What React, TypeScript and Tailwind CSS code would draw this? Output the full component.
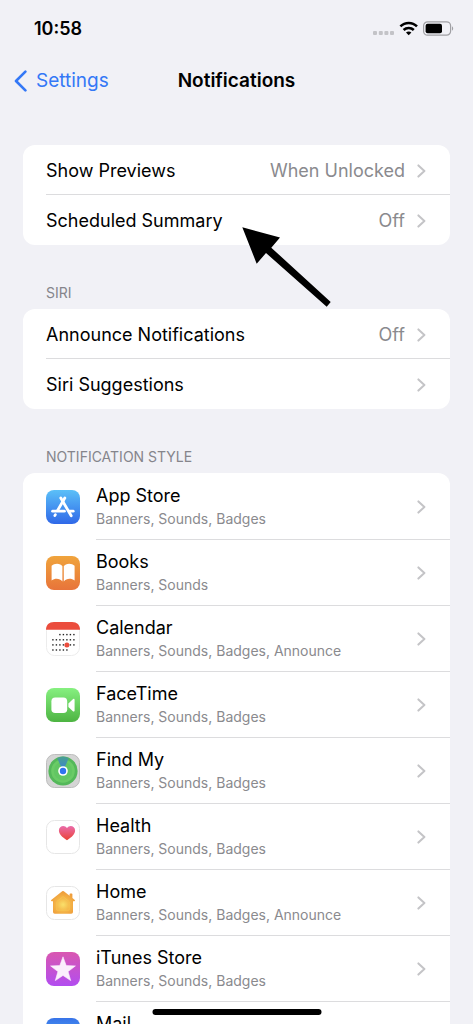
import React from 'react'

interface AppEntry {
  name: string
  detail: string
  icon: React.ReactNode
}

function AppIcon({ children }: { children: React.ReactNode }) {
  return (
    <svg viewBox="0 0 34 34" className="h-[34px] w-[34px] shrink-0" aria-hidden="true">
      {children}
    </svg>
  )
}

function Gradient({ id, from, to }: { id: string; from: string; to: string }) {
  return (
    <defs>
      <linearGradient id={id} x1="0" y1="0" x2="0" y2="1">
        <stop offset="0" stopColor={from} />
        <stop offset="1" stopColor={to} />
      </linearGradient>
    </defs>
  )
}

function AppStoreIcon() {
  return (
    <AppIcon>
      <Gradient id="store" from="#5bc0f8" to="#2f68e8" />
      <rect width="34" height="34" rx="8" fill="url(#store)" />
      <g stroke="#fff" strokeWidth="2.8" strokeLinecap="round" fill="none">
        <path d="M18.8 8 L11.6 20.4" />
        <path d="M14.8 8 L25.2 25.8" />
        <path d="M6.6 21.2 H18.4" />
        <path d="M23.4 21.2 H27.2" />
        <path d="M9.4 24.6 L8.8 25.6" />
      </g>
    </AppIcon>
  )
}

function BooksIcon() {
  return (
    <AppIcon>
      <Gradient id="books" from="#f0a43c" to="#e8743a" />
      <rect width="34" height="34" rx="8" fill="url(#books)" />
      <path
        d="M16.4 10.2 C14.8 7.2 8.4 6.8 5.6 9.8 V24.4 C9 22 14 22.2 16.4 25.6 Z M17.8 10.2 C19.4 7.2 25.8 6.8 28.6 9.8 V24.4 C25.2 22 20.2 22.2 17.8 25.6 Z"
        fill="#fff"
      />
    </AppIcon>
  )
}

const calendarRows = [
  { y: 12.6, from: 2, to: 6 },
  { y: 17.8, from: 0, to: 6 },
  { y: 22.9, from: 0, to: 6 },
  { y: 28, from: 0, to: 4 },
]

function CalendarIcon() {
  return (
    <AppIcon>
      <rect x="0.5" y="0.5" width="33" height="33" rx="8" fill="#fff" stroke="#ececec" />
      <path d="M0 7.8 C0 3 3 0 8 0 H26 C31 0 34 3 34 7.8 Z" fill="#eb4d3d" />
      {calendarRows.map((row) =>
        [0, 1, 2, 3, 4, 5, 6]
          .filter((col) => col >= row.from && col <= row.to)
          .map((col) => (
            <rect key={`${row.y}-${col}`} x={6.2 + col * 3.5} y={row.y - 0.7} width="1.4" height="1.4" fill="#222" />
          )),
      )}
      <circle cx="20.9" cy="22.9" r="2.5" fill="#eb4d3d" />
    </AppIcon>
  )
}

function FaceTimeIcon() {
  return (
    <AppIcon>
      <Gradient id="facetime" from="#86f080" to="#4db442" />
      <rect width="34" height="34" rx="8" fill="url(#facetime)" />
      <rect x="5.4" y="9.6" width="15.8" height="15.4" rx="3.8" fill="#fff" />
      <path d="M22.4 15.6 L26.6 11.4 C27.6 10.4 28.6 10.8 28.6 12 V22.4 C28.6 23.6 27.6 24 26.6 23 L22.4 19 Z" fill="#fff" />
    </AppIcon>
  )
}

function FindMyIcon() {
  return (
    <AppIcon>
      <defs>
        <linearGradient id="beam" x1="0" y1="0" x2="0" y2="1">
          <stop offset="0" stopColor="#49a08f" />
          <stop offset="1" stopColor="#3a7fd8" />
        </linearGradient>
      </defs>
      <rect x="0.5" y="0.5" width="33" height="33" rx="8" fill="#d5d5d5" stroke="#bdbdbd" />
      <circle cx="17" cy="17" r="14.6" fill="#54b85a" />
      <circle cx="17" cy="17" r="11.8" fill="#6acb66" />
      <circle cx="17" cy="17" r="9.2" fill="#62c663" />
      <path d="M17 17 L11.2 4.2 Q17 1 22.8 4.2 Z" fill="url(#beam)" />
      <circle cx="17" cy="17" r="4.8" fill="#fff" />
      <circle cx="17" cy="17" r="3.2" fill="#2f74ee" />
    </AppIcon>
  )
}

function HealthIcon() {
  return (
    <AppIcon>
      <Gradient id="heart" from="#ea6cab" to="#ea4335" />
      <rect x="0.5" y="0.5" width="33" height="33" rx="8" fill="#fff" stroke="#e6e6e6" />
      <path
        d="M21 20.2 C16 16.8 12.9 14 12.9 10.4 C12.9 5.6 18.8 4.4 21 8 C23.2 4.4 29.1 5.6 29.1 10.4 C29.1 14 26 16.8 21 20.2 Z"
        fill="url(#heart)"
      />
    </AppIcon>
  )
}

function HomeIcon() {
  return (
    <AppIcon>
      <defs>
        <radialGradient id="house" cx="0.5" cy="0.6" r="0.6">
          <stop offset="0" stopColor="#fae06a" />
          <stop offset="0.5" stopColor="#f4b548" />
          <stop offset="1" stopColor="#ee9838" />
        </radialGradient>
      </defs>
      <rect x="0.5" y="0.5" width="33" height="33" rx="8" fill="#fff" stroke="#e6e6e6" />
      <path
        d="M16.2 5.2 Q17 4.6 17.8 5.2 L23.6 9.8 V8.2 Q23.6 7.4 24.4 7.4 H25.6 Q26.4 7.4 26.4 8.2 V12 L28.8 14 Q29.4 15 28.4 15.2 H27 V26 Q27 27.8 25.2 27.8 H8.8 Q7 27.8 7 26 V15.2 H5.6 Q4.6 15 5.2 14 Z"
        fill="url(#house)"
      />
      <path d="M17 10.6 L23.2 15.6 V24.2 H10.8 V15.6 Z" fill="none" stroke="#f7c653" strokeWidth="1" opacity="0.7" />
    </AppIcon>
  )
}

function ITunesIcon() {
  return (
    <AppIcon>
      <Gradient id="itunes" from="#d957b0" to="#b24df0" />
      <rect width="34" height="34" rx="8" fill="url(#itunes)" />
      <path
        d="M17 4.8 L20.2 13.6 L29.4 13.9 L22.1 19.6 L24.7 28.6 L17 23.4 L9.3 28.6 L11.9 19.6 L4.6 13.9 L13.8 13.6 Z"
        fill="#fbeffc"
        stroke="#fbeffc"
        strokeWidth="0.6"
        strokeLinejoin="round"
      />
    </AppIcon>
  )
}

function MailIcon() {
  return (
    <AppIcon>
      <Gradient id="mail" from="#3873e8" to="#5ac1f9" />
      <rect width="34" height="34" rx="8" fill="url(#mail)" />
      <rect x="5" y="9" width="24" height="16" rx="3" fill="#fff" />
      <path d="M6 10.5 L17 19 L28 10.5" fill="none" stroke="#4a8df0" strokeWidth="1.4" />
    </AppIcon>
  )
}

const apps: AppEntry[] = [
  { name: 'App Store', detail: 'Banners, Sounds, Badges', icon: <AppStoreIcon /> },
  { name: 'Books', detail: 'Banners, Sounds', icon: <BooksIcon /> },
  { name: 'Calendar', detail: 'Banners, Sounds, Badges, Announce', icon: <CalendarIcon /> },
  { name: 'FaceTime', detail: 'Banners, Sounds, Badges', icon: <FaceTimeIcon /> },
  { name: 'Find My', detail: 'Banners, Sounds, Badges', icon: <FindMyIcon /> },
  { name: 'Health', detail: 'Banners, Sounds, Badges', icon: <HealthIcon /> },
  { name: 'Home', detail: 'Banners, Sounds, Badges, Announce', icon: <HomeIcon /> },
  { name: 'iTunes Store', detail: 'Banners, Sounds, Badges', icon: <ITunesIcon /> },
  { name: 'Mail', detail: '', icon: <MailIcon /> },
]

function Chevron() {
  return (
    <svg viewBox="0 0 9 14" className="h-[14px] w-[9px] shrink-0" aria-hidden="true">
      <path d="M1.4 1.4 L7.4 7 L1.4 12.6" fill="none" stroke="#c4c4c7" strokeWidth="2" strokeLinecap="round" strokeLinejoin="round" />
    </svg>
  )
}

function SettingRow({ label, value, last = false }: { label: string; value?: string; last?: boolean }) {
  return (
    <button type="button" className="block w-full pl-[23px] text-left">
      <span className={`flex h-[50px] items-center gap-3 pt-[2px] pr-6 ${last ? '' : 'border-b border-[#dcdcde]'}`}>
        <span className="flex-1 text-[18px] leading-6 text-black">{label}</span>
        {value && <span className="text-[18px] leading-6 text-[#8a8a8e]">{value}</span>}
        <Chevron />
      </span>
    </button>
  )
}

function AppRow({ app }: { app: AppEntry }) {
  return (
    <button type="button" className="flex w-full items-center gap-4 pl-[23px] text-left">
      {app.icon}
      <span className="flex h-[66px] min-w-0 flex-1 items-center border-b border-[#dcdcde] pr-6">
        <span className="flex min-w-0 flex-1 flex-col">
          <span className="text-[18px] leading-6 text-black">{app.name}</span>
          <span className="h-[22px] text-[14px] leading-[22px] text-[#8a8a8e]">{app.detail}</span>
        </span>
        <Chevron />
      </span>
    </button>
  )
}

function SectionTitle({ children }: { children: React.ReactNode }) {
  return <h2 className="px-[23px] pt-[38px] pb-[6px] text-[14px] leading-5 text-[#85858b]">{children}</h2>
}

function StatusBar() {
  return (
    <div className="flex h-[58px] shrink-0 items-center justify-between pr-[18px] pl-[34px]">
      <span className="text-[18px] leading-6 font-semibold text-black">10:58</span>
      <svg viewBox="0 0 82 16" className="h-4 w-[82px]" aria-hidden="true">
        <g fill="#c3c3c7">
          <rect x="0" y="10" width="4" height="4" rx="1" />
          <rect x="5.8" y="10" width="4" height="4" rx="1" />
          <rect x="11.4" y="10" width="4" height="4" rx="1" />
          <rect x="17" y="10" width="4" height="4" rx="1" />
        </g>
        <g fill="none" stroke="#000" strokeWidth="2.5">
          <path d="M27.4 5.4 C32 0.7 39.4 0.7 44 5.4" />
          <path d="M30.6 9 C33.4 6.2 38 6.2 40.8 9" />
        </g>
        <path d="M33 11.6 C34.4 10.1 37 10.1 38.4 11.6 L35.7 14.2 Z" fill="#000" />
        <rect x="50.6" y="0.8" width="27" height="13.4" rx="4" fill="none" stroke="#a0a0a4" strokeWidth="1.2" />
        <rect x="52.6" y="2.7" width="16.4" height="9.6" rx="2" fill="#000" />
        <path d="M79 5.2 Q81.4 7.4 79 9.8 Z" fill="#a0a0a4" />
      </svg>
    </div>
  )
}

export default function App() {
  return (
    <div className="relative flex h-screen flex-col overflow-hidden bg-[#f1f1f6] font-[Inter,'Liberation_Sans',sans-serif]">
      <StatusBar />
      <header className="grid h-[46px] shrink-0 grid-cols-[1fr_auto_1fr] items-center px-[14px]">
        <a href="#settings" className="flex items-center gap-[9px] text-[19px] leading-6 text-[#3478f6]">
          <svg viewBox="0 0 13 22" className="h-[22px] w-[13px]" aria-hidden="true">
            <path d="M11.4 1.6 L2 11 L11.4 20.4" fill="none" stroke="currentColor" strokeWidth="2.6" strokeLinecap="round" strokeLinejoin="round" />
          </svg>
          Settings
        </a>
        <h1 className="text-[19px] leading-6 font-semibold text-black">Notifications</h1>
      </header>

      <main className="min-h-0 flex-1 overflow-y-auto px-[23px] pt-[41px] [scrollbar-width:none]">
        <section className="relative rounded-xl bg-white">
          <SettingRow label="Show Previews" value="When Unlocked" />
          <SettingRow label="Scheduled Summary" value="Off" last />
          <svg viewBox="0 0 90 81" className="pointer-events-none absolute top-[82px] left-[219px] h-[81px] w-[90px]" aria-hidden="true">
            <path d="M0.3 0.3 L38 10.4 L29.3 20.7 L88.7 75 L84.7 79.7 L24 26 L14.7 36.7 Z" fill="#000" />
          </svg>
        </section>

        <SectionTitle>SIRI</SectionTitle>
        <section className="rounded-xl bg-white">
          <SettingRow label="Announce Notifications" value="Off" />
          <SettingRow label="Siri Suggestions" last />
        </section>

        <SectionTitle>NOTIFICATION STYLE</SectionTitle>
        <section className="rounded-xl bg-white pt-px">
          {apps.map((app) => (
            <AppRow key={app.name} app={app} />
          ))}
        </section>
      </main>

      <div className="absolute bottom-[9px] left-1/2 h-[6px] w-[169px] -translate-x-1/2 rounded-full bg-black" />
    </div>
  )
}
